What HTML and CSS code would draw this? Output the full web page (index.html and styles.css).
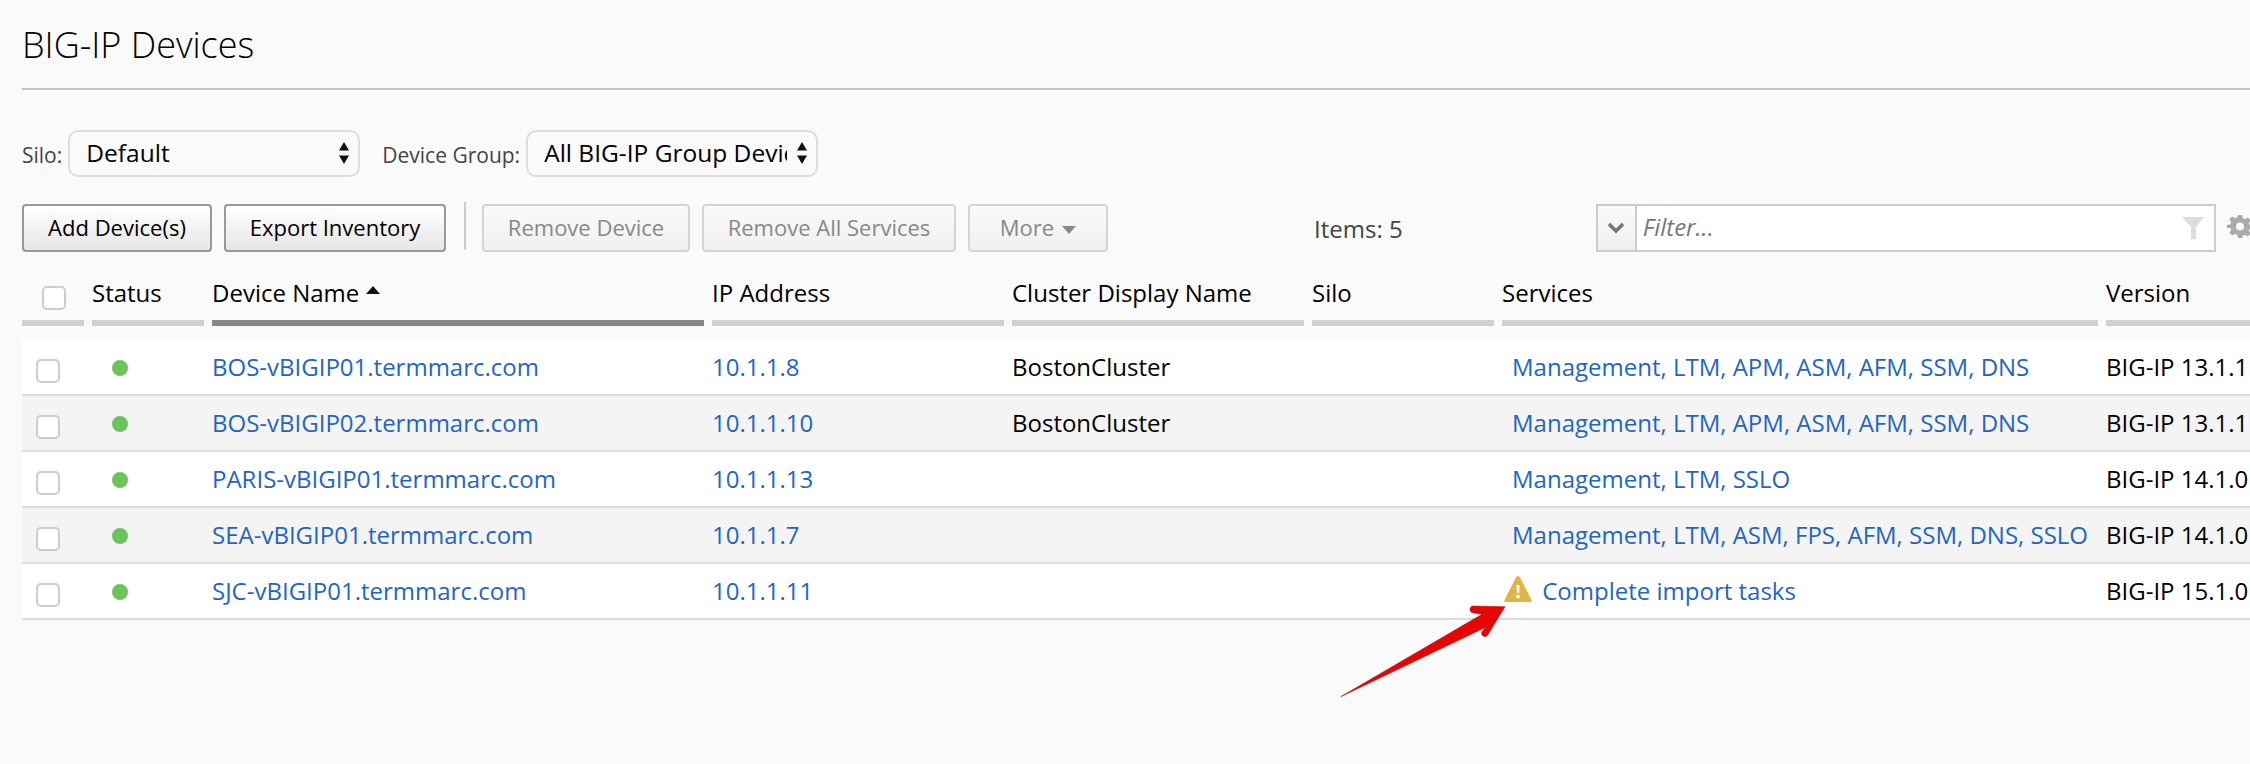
FILE: index.html
```html
<!DOCTYPE html>
<html lang="en">
  <head>
    <meta charset="UTF-8" />
    <title>BIG-IP Devices</title>
    <link rel="stylesheet" href="styles.css">
  </head>
  <body>
    <h1 class="page-title">BIG-IP Devices</h1>

    <div class="scope-row">
      <label class="scope-label" for="silo">Silo:</label>
      <span class="select-wrap">
        <select id="silo" class="scope-select"><option>Default</option></select>
        <svg class="select-arrows" width="12" height="24" viewBox="0 0 12 24"><path d="M6 1l5 8.500H1zM6 23l-5-8.500h10z" fill="#111"/></svg>
      </span>
      <label class="scope-label group-label" for="group">Device Group:</label>
      <span class="select-wrap">
        <select id="group" class="scope-select"><option>All BIG-IP Group Devices</option></select>
        <svg class="select-arrows" width="12" height="24" viewBox="0 0 12 24"><path d="M6 1l5 8.500H1zM6 23l-5-8.500h10z" fill="#111"/></svg>
      </span>
    </div>

    <div class="toolbar">
      <button class="btn add-btn">Add Device(s)</button>
      <button class="btn export-btn">Export Inventory</button>
      <span class="toolbar-sep"></span>
      <button class="btn btn-off remove-btn">Remove Device</button>
      <button class="btn btn-off remove-all-btn">Remove All Services</button>
      <button class="btn btn-off more-btn">More<span class="more-caret"></span></button>
      <span class="items-count">Items: 5</span>
      <div class="filter">
        <span class="filter-drop">
          <svg width="18" height="12" viewBox="0 0 18 12"><path d="M2 2l7 7 7-7" fill="none" stroke="#777" stroke-width="3.500"/></svg>
        </span>
        <span class="filter-text">Filter...</span>
        <svg class="filter-funnel" width="22" height="22" viewBox="0 0 22 22"><path d="M0 0h22l-8 10v12h-5V10z" fill="#ddd"/></svg>
      </div>
      <svg class="gear" width="24" height="24" viewBox="0 0 24 24"><path fill-rule="evenodd" fill="#aaa" d="M10 1h4l.8 3.300 2 .9 3-1.800 2.800 2.800-1.800 3 .9 2L25 11v3l-3.300.8-.9 2 1.800 3-2.800 2.800-3-1.800-2 .9L14 24h-4l-.8-3.300-2-.9-3 1.800-2.800-2.800 1.800-3-.9-2L-1 14v-3l3.300-.8.9-2-1.800-3 2.800-2.800 3 1.800 2-.9zM12 8.500a4 4 0 1 0 0 8 4 4 0 0 0 0-8z"/></svg>
    </div>

    <table class="devices">
      <colgroup>
        <col class="col-check"><col class="col-status"><col class="col-name"><col class="col-ip">
        <col class="col-cluster"><col class="col-silo"><col class="col-services"><col class="col-version">
      </colgroup>
      <thead>
        <tr>
          <th><div class="head head-check"><input type="checkbox" class="check check-all"></div></th>
          <th><div class="head">Status</div></th>
          <th><div class="head head-sorted">Device Name<span class="sort-up"></span></div></th>
          <th><div class="head">IP Address</div></th>
          <th><div class="head">Cluster Display Name</div></th>
          <th><div class="head">Silo</div></th>
          <th><div class="head">Services</div></th>
          <th><div class="head">Version</div></th>
        </tr>
      </thead>
      <tbody>
        <tr>
          <td class="cell-check"><input type="checkbox" class="check"></td>
          <td><span class="dot"></span></td>
          <td><a href="#">BOS-vBIGIP01.termmarc.com</a></td>
          <td><a href="#">10.1.1.8</a></td>
          <td>BostonCluster</td>
          <td></td>
          <td class="cell-services"><a href="#">Management, LTM, APM, ASM, AFM, SSM, DNS</a></td>
          <td>BIG-IP 13.1.1</td>
        </tr>
        <tr>
          <td class="cell-check"><input type="checkbox" class="check"></td>
          <td><span class="dot"></span></td>
          <td><a href="#">BOS-vBIGIP02.termmarc.com</a></td>
          <td><a href="#">10.1.1.10</a></td>
          <td>BostonCluster</td>
          <td></td>
          <td class="cell-services"><a href="#">Management, LTM, APM, ASM, AFM, SSM, DNS</a></td>
          <td>BIG-IP 13.1.1</td>
        </tr>
        <tr>
          <td class="cell-check"><input type="checkbox" class="check"></td>
          <td><span class="dot"></span></td>
          <td><a href="#">PARIS-vBIGIP01.termmarc.com</a></td>
          <td><a href="#">10.1.1.13</a></td>
          <td></td>
          <td></td>
          <td class="cell-services"><a href="#">Management, LTM, SSLO</a></td>
          <td>BIG-IP 14.1.0</td>
        </tr>
        <tr>
          <td class="cell-check"><input type="checkbox" class="check"></td>
          <td><span class="dot"></span></td>
          <td><a href="#">SEA-vBIGIP01.termmarc.com</a></td>
          <td><a href="#">10.1.1.7</a></td>
          <td></td>
          <td></td>
          <td class="cell-services"><a href="#">Management, LTM, ASM, FPS, AFM, SSM, DNS, SSLO</a></td>
          <td>BIG-IP 14.1.0</td>
        </tr>
        <tr>
          <td class="cell-check"><input type="checkbox" class="check"></td>
          <td><span class="dot"></span></td>
          <td><a href="#">SJC-vBIGIP01.termmarc.com</a></td>
          <td><a href="#">10.1.1.11</a></td>
          <td></td>
          <td></td>
          <td class="cell-warn">
            <svg class="warn-icon" width="28" height="26" viewBox="0 0 28 26"><path d="M14 0c1 0 1.600.7 2.200 1.800L27.500 24c.4.900.1 2-1.500 2H2C.4 26 .1 24.900.5 24L11.800 1.800C12.400.7 13 0 14 0z" fill="#e3b344"/><path d="M12.300 9h3.400l-.6 8h-2.200z" fill="#fff"/><circle cx="14" cy="20.500" r="1.900" fill="#fff"/></svg>
            <a href="#">Complete import tasks</a>
          </td>
          <td>BIG-IP 15.1.0</td>
        </tr>
      </tbody>
    </table>

    <!-- annotation drawn on top of the screenshot -->
    <svg class="callout" width="220" height="110" viewBox="30 60 220 110">
      <path d="M205 66.700L173 66c-3.500 0-4.200 6-.5 6.700l9.500 1.600L40.700 156.700l145-69.400-3.700 4.400c-2 3.500 3 6.500 5.500 3.500z" fill="#e60404" stroke="#b30000" stroke-width=".5"/>
    </svg>
  </body>
</html>
```

FILE: styles.css
```css
html,
body {
  height: 100%;
}
body {
  margin: 0;
  padding-left: 22px;
  position: relative;
  overflow: hidden;
  background: #fafafa;
  color: #000;
  font-family: "Open Sans", "Liberation Sans", sans-serif;
  font-size: 24px;
}
.page-title {
  margin: 0;
  height: 88px;
  box-sizing: content-box;
  border-bottom: 2px solid #c4c4c4;
  font-size: 36px;
  font-weight: 300;
  line-height: 90px;
}

/* silo + device group */
.scope-row {
  display: flex;
  align-items: center;
  margin-top: 40px;
  height: 47px;
}
.scope-label {
  color: #444;
  font-size: 21px;
  margin-top: 3px;
}
.group-label {
  margin-left: 22px;
}
.select-wrap {
  position: relative;
  margin-left: 6px;
}
.scope-select {
  display: block;
  appearance: none;
  width: 292px;
  height: 47px;
  padding: 0 29px 2px 16px;
  box-sizing: border-box;
  border: 2px solid #ddd;
  border-radius: 10px;
  background: #fafafa;
  color: #000;
  font-family: inherit;
  font-size: 24.500px;
}
.select-arrows {
  position: absolute;
  right: 10px;
  top: 11px;
}

/* buttons row */
.toolbar {
  display: flex;
  align-items: center;
  margin-top: 27px;
  height: 48px;
}
.toolbar > * {
  flex: none;
}
.btn {
  height: 48px;
  box-sizing: border-box;
  padding: 0 0 2px;
  border: 2px solid #999;
  border-radius: 4px;
  background: linear-gradient(#fff, #e6e6e6);
  color: #000;
  font-family: inherit;
  font-size: 22px;
}
.btn-off {
  border-color: #d4d4d4;
  background: linear-gradient(#fafafa, #f0f0f0);
  color: #888;
}
.add-btn {
  width: 190px;
}
.export-btn {
  width: 222px;
  margin-left: 12px;
}
.toolbar-sep {
  width: 2px;
  height: 48px;
  margin: -4px 16px 0 18px;
  background: #ccc;
}
.remove-btn {
  width: 208px;
}
.remove-all-btn {
  width: 254px;
  margin-left: 12px;
}
.more-btn {
  width: 140px;
  margin-left: 12px;
}
.more-caret {
  display: inline-block;
  margin-left: 8px;
  vertical-align: 2px;
  border-style: solid;
  border-width: 8px 7px 0;
  border-color: #888 transparent transparent;
}
.items-count {
  margin-left: 206px;
  color: #444;
}
.filter {
  display: flex;
  align-items: center;
  margin-left: 193px;
  width: 620px;
  height: 48px;
  box-sizing: border-box;
  border: 2px solid #ccc;
  background: #fff;
}
.filter-drop {
  display: flex;
  align-items: center;
  justify-content: center;
  width: 37px;
  height: 100%;
  border-right: 2px solid #ccc;
  background: linear-gradient(#fafafa, #efefef);
}
.filter-text {
  margin-left: 6px;
  padding-bottom: 3px;
  flex: 1;
  color: #777;
  font-style: italic;
}
.filter-funnel {
  margin-right: 10px;
}
.gear {
  margin-left: 12px;
  margin-top: -4px;
  filter: blur(.5px);
  overflow: visible;
}

/* device table */
.devices {
  margin-top: 23px;
  width: 2284px;
  table-layout: fixed;
  border-collapse: collapse;
}
.col-check {
  width: 70px;
}
.col-status {
  width: 120px;
}
.col-name {
  width: 500px;
}
.col-ip,
.col-cluster {
  width: 300px;
}
.col-silo {
  width: 190px;
}
.col-services {
  width: 604px;
}
.devices th {
  padding: 0 8px 14px 0;
  font-weight: 400;
  text-align: left;
  vertical-align: bottom;
}
.head {
  height: 45px;
  line-height: 36px;
  border-bottom: 6px solid #d0d0d0;
  white-space: nowrap;
}
.head-sorted {
  border-bottom-color: #888;
}
.head-check {
  height: 34px;
  padding-top: 11px;
}
.sort-up {
  display: inline-block;
  margin-left: 7px;
  vertical-align: 8px;
  border-style: solid;
  border-width: 0 7px 8px;
  border-color: transparent transparent #111;
}
.devices td {
  height: 52px;
  padding: 0 0 2px;
  background: #fff;
  border-bottom: 2px solid #ddd;
  white-space: nowrap;
}
.devices tbody tr:nth-child(even) td {
  background: #f4f4f4;
}
.devices a {
  color: #1f66c4;
  text-decoration: none;
}
.check {
  display: block;
  appearance: none;
  width: 24px;
  height: 24px;
  margin: 0;
  border: 2px solid #ccc;
  border-radius: 5px;
  background: #fff;
}
.check-all {
  margin-left: 20px;
}
.devices td.cell-check {
  padding: 7px 0 0 14px;
  height: 47px;
}
.dot {
  display: block;
  width: 16px;
  height: 16px;
  margin: 4px 0 0 20px;
  border-radius: 50%;
  background: #6cc35d;
}
.devices td.cell-services {
  padding-left: 10px;
}
.devices td.cell-warn {
  padding-left: 2px;
}
.warn-icon {
  margin-right: 4px;
  vertical-align: -2px;
  filter: blur(.4px);
}
.callout {
  position: absolute;
  left: 1330px;
  top: 600px;
}
```
